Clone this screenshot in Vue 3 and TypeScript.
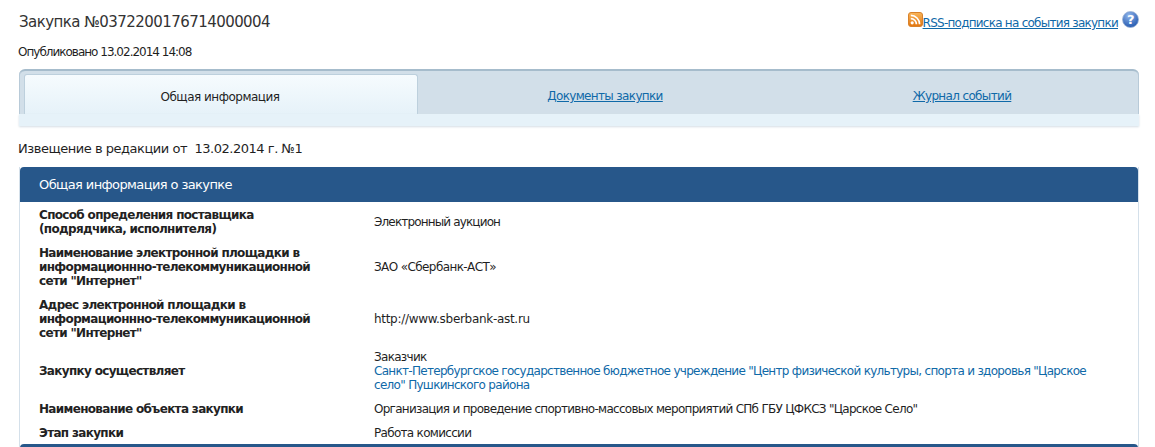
<script setup lang="ts">
interface Row { label: string; value?: string; kind?: string; h: number; ls?: number }
const rows: Row[] = [
  { label: 'Способ определения поставщика (подрядчика, исполнителя)', value: 'Электронный аукцион', h: 38, ls: -0.85 },
  { label: 'Наименование электронной площадки в информационнно-телекоммуникационной сети "Интернет"', value: 'ЗАО «Сбербанк-АСТ»', h: 52, ls: -0.6 },
  { label: 'Адрес электронной площадки в информационнно-телекоммуникационной сети "Интернет"', value: 'http://www.sberbank-ast.ru', h: 52, ls: -0.3 },
  { label: 'Закупку осуществляет', kind: 'org', h: 52, ls: -0.7 },
  { label: 'Наименование объекта закупки', value: 'Организация и проведение спортивно-массовых мероприятий СПб ГБУ ЦФКСЗ "Царское Село"', h: 24, ls: -0.72 },
  { label: 'Этап закупки', value: 'Работа комиссии', h: 24, ls: -0.7 },
]
</script>

<template>
  <div class="page">
    <header class="top">
      <h1 class="title">Закупка №0372200176714000004</h1>
      <div class="rss">
        <svg class="rss-icon" width="15" height="15" viewBox="0 0 15 15">
          <defs>
            <linearGradient id="rg" x1="0" y1="0" x2="0" y2="1">
              <stop offset="0" stop-color="#f9b65a" />
              <stop offset="1" stop-color="#e2750f" />
            </linearGradient>
          </defs>
          <rect x="0.5" y="0.5" width="14" height="14" rx="2.5" fill="url(#rg)" stroke="#d9822b" />
          <circle cx="4.2" cy="10.8" r="1.6" fill="#fff" />
          <path d="M2.8 6.6a5.6 5.6 0 0 1 5.6 5.6M2.8 3.4a8.8 8.8 0 0 1 8.8 8.8" fill="none" stroke="#fff" stroke-width="1.7" />
        </svg>
        <a class="link rss-link">RSS-подписка на события закупки</a>
        <svg class="help" width="17" height="17" viewBox="0 0 17 17">
          <defs>
            <radialGradient id="hg" cx="0.4" cy="0.25" r="0.8">
              <stop offset="0" stop-color="#8fb4ea" />
              <stop offset="1" stop-color="#1f55ad" />
            </radialGradient>
          </defs>
          <circle cx="8.5" cy="8.5" r="8" fill="url(#hg)" stroke="#9db4d6" stroke-width="0.8" />
          <text x="8.5" y="13" text-anchor="middle" class="help-q">?</text>
        </svg>
      </div>
    </header>
    <p class="published">Опубликовано 13.02.2014 14:08</p>

    <nav class="tabs">
      <div class="tab-row">
        <div class="tab active">Общая информация</div>
        <div class="tab second"><a class="link">Документы закупки</a></div>
        <div class="tab third"><a class="link">Журнал событий</a></div>
      </div>
      <div class="tab-foot"></div>
    </nav>

    <p class="notice">Извещение в редакции от&nbsp; 13.02.2014 г. №1</p>

    <section class="card">
      <h2 class="card-head">Общая информация о закупке</h2>
      <div class="rows">
        <div v-for="r in rows" :key="r.label" class="row" :style="{ height: r.h + 'px' }">
          <div class="label">{{ r.label }}</div>
          <div class="value" :style="{ letterSpacing: r.ls + 'px' }">
            <template v-if="r.kind === 'org'">
              Заказчик<br />
              <a class="org">Санкт-Петербургское государственное бюджетное учреждение "Центр физической культуры, спорта и здоровья "Царское село" Пушкинского района</a>
            </template>
            <template v-else>{{ r.value }}</template>
          </div>
        </div>
      </div>
      <div class="next-head"></div>
    </section>
  </div>
</template>

<style>
html, body { margin: 0; background: #fff; overflow: hidden; }
</style>

<style scoped>
.page {
  width: 1155px;
  height: 447px;
  overflow: hidden;
  box-sizing: border-box;
  padding: 0 16px 0 19px;
  font-family: Tahoma, "DejaVu Sans", sans-serif;
  font-size: 12px;
  color: #1f1f1f;
  letter-spacing: -0.75px;
}
.top {
  display: flex;
  justify-content: space-between;
  align-items: flex-start;
  height: 44px;
}
.title {
  margin: 13px 0 0;
  font-size: 15px;
  line-height: 19px;
  font-weight: 400;
  letter-spacing: -0.55px;
  color: #333;
}
.rss {
  display: flex;
  align-items: flex-start;
  margin-top: 11px;
}
.rss-icon { display: block; margin: 1px 0 0 0; }
.rss-link { line-height: 15px; margin-top: 5px; }
.help { display: block; margin: 0 0 0 4px; }
.help-q { font: bold 13px "DejaVu Sans", sans-serif; fill: #fff; }
.link { color: #0f69a8; text-decoration: underline; }
.published {
  margin: 0 0 0 -1px;
  height: 25px;
  line-height: 17px;
  letter-spacing: -1px;
}
.tabs {
  width: 1120px;
  height: 57px;
  box-sizing: border-box;
  background: #d2dfe9;
  border-top: 2px solid #a6bccc;
  border-radius: 6px 6px 0 0;
  box-shadow: inset 1px 0 0 #b8cad8, inset -1px 0 0 #b8cad8;
  display: flex;
  flex-direction: column;
}
.tab-row { display: flex; height: 43px; padding-left: 5px; }
.tab {
  display: flex;
  align-items: center;
  justify-content: center;
  font-size: 12px;
  letter-spacing: -0.65px;
  padding-top: 7px;
  box-sizing: border-box;
}
.tab.second { flex: 0 0 374px; }
.tab.third { flex: 0 0 340px; }
.tab.active {
  flex: 0 0 394px;
  margin-top: 3px;
  padding-top: 4px;
  padding-right: 2px;
  letter-spacing: -0.5px;
  background: linear-gradient(#f6fbfe, #e6f2f9);
  border: 1px solid #bdd0dd;
  border-bottom: 0;
  border-radius: 3px 3px 0 0;
}
.tab-foot {
  flex: 1;
  background: #e6f2f9;
  box-shadow: 0 1px 2px #d5dee5;
}
.notice {
  margin: 0 0 0 -1px;
  padding-top: 14px;
  height: 41px;
  box-sizing: border-box;
  font-size: 13px;
  line-height: 18px;
  letter-spacing: -0.47px;
}
.card {
  width: 1120px;
  box-sizing: border-box;
  border-left: 1px solid #d4e0ea;
  border-right: 1px solid #d4e0ea;
}
.card-head {
  margin: 0;
  height: 35px;
  padding-left: 19px;
  background: #27578a;
  border-radius: 4px 4px 0 0;
  color: #fff;
  font-size: 13px;
  line-height: 36px;
  font-weight: 400;
  letter-spacing: -0.6px;
}
.rows {
  height: 242px;
  box-sizing: border-box;
  padding-top: 1px;
  overflow: hidden;
}
.row {
  display: flex;
  align-items: center;
  padding-left: 19px;
}
.label {
  flex: 0 0 335px;
  width: 335px;
  padding-right: 50px;
  box-sizing: border-box;
  font-weight: 700;
  font-size: 12px;
  line-height: 14px;
  letter-spacing: -0.67px;
  color: #222;
}
.value {
  flex: 1;
  line-height: 14px;
  padding-right: 40px;
}
.org { color: #0f69a8; }
.next-head {
  height: 8px;
  background: #27578a;
  border-radius: 4px 4px 0 0;
}
</style>
